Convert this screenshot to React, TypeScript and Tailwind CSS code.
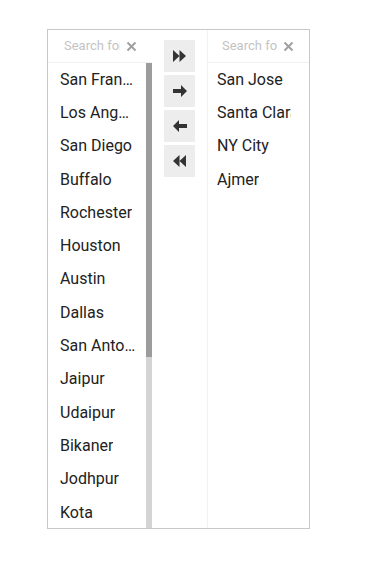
import React from "react";

const left = [
  "San Francisco",
  "Los Angeles",
  "San Diego",
  "Buffalo",
  "Rochester",
  "Houston",
  "Austin",
  "Dallas",
  "San Antonio",
  "Jaipur",
  "Udaipur",
  "Bikaner",
  "Jodhpur",
  "Kota",
  "Mumbai",
  "Pune",
];

const right = ["San Jose", "Santa Clara", "NY City", "Ajmer"];

function ClearIcon() {
  return (
    <svg width="11" height="11" viewBox="0 0 11 11" className="shrink-0">
      <path d="M1.5 1.5 L9.5 9.5 M9.5 1.5 L1.5 9.5" stroke="#a0a0a0" strokeWidth="2" />
    </svg>
  );
}

function SearchBox({ pad }: { pad: string }) {
  return (
    <div className={`h-[33px] border-b border-[#f0f0f0] flex items-center ${pad} pr-[15px] gap-[6px]`}>
      <span className="flex-1 min-w-0 overflow-hidden whitespace-nowrap text-[13px] text-[#c4c4c4]">
        Search for cities
      </span>
      <ClearIcon />
    </div>
  );
}

const icons = [
  // fast forward
  <svg key="ff" width="13" height="12" viewBox="0 0 13 12">
    <path d="M0 0 L6.5 6 L0 12 Z M6.5 0 L13 6 L6.5 12 Z" fill="#333" />
  </svg>,
  // arrow right
  <svg key="r" width="14" height="12" viewBox="0 0 14 12">
    <path d="M0 4 H8 V0 L14 6 L8 12 V8 H0 Z" fill="#333" />
  </svg>,
  // arrow left
  <svg key="l" width="14" height="12" viewBox="0 0 14 12">
    <path d="M14 4 H6 V0 L0 6 L6 12 V8 H14 Z" fill="#333" />
  </svg>,
  // rewind
  <svg key="rw" width="13" height="12" viewBox="0 0 13 12">
    <path d="M13 0 L6.5 6 L13 12 Z M6.5 0 L0 6 L6.5 12 Z" fill="#333" />
  </svg>,
];

export default function App() {
  return (
    <div className="min-h-[571px] bg-white pt-[29px] pl-[47px] font-['Roboto',sans-serif]">
      <div className="w-[263px] h-[500px] border border-[#c8c8c8] flex">
        {/* left list */}
        <div className="w-[104px] shrink-0 flex flex-col">
          <SearchBox pad="pl-[16px]" />
          <div className="flex-1 flex overflow-hidden">
            <div className="flex-1 min-w-0 overflow-hidden">
              {left.map((c) => (
                <div key={c} className="h-[33.3px] flex items-center pl-[12px] pr-[10px] text-[16px] text-[#222]">
                  <span className="truncate">{c}</span>
                </div>
              ))}
            </div>
            <div className="w-[6px] shrink-0 bg-[#d4d4d4] flex flex-col">
              <div className="h-[294px] bg-[#9c9c9c]" />
            </div>
          </div>
        </div>

        {/* buttons */}
        <div className="w-[55px] shrink-0 flex flex-col items-center pt-[10px] gap-[3px]">
          {icons.map((ic, i) => (
            <div key={i} className="w-[31px] h-[32px] bg-[#ededed] flex items-center justify-center">
              {ic}
            </div>
          ))}
        </div>

        {/* right list */}
        <div className="flex-1 min-w-0 flex flex-col border-l border-[#f2f2f2]">
          <SearchBox pad="pl-[14px]" />
          <div className="flex-1 overflow-hidden">
            {right.map((c) => (
              <div key={c} className="h-[33.3px] flex items-center pl-[9px] pr-[18px] text-[16px] text-[#222]">
                <span className="min-w-0 overflow-hidden whitespace-nowrap">{c}</span>
              </div>
            ))}
          </div>
        </div>
      </div>
    </div>
  );
}
